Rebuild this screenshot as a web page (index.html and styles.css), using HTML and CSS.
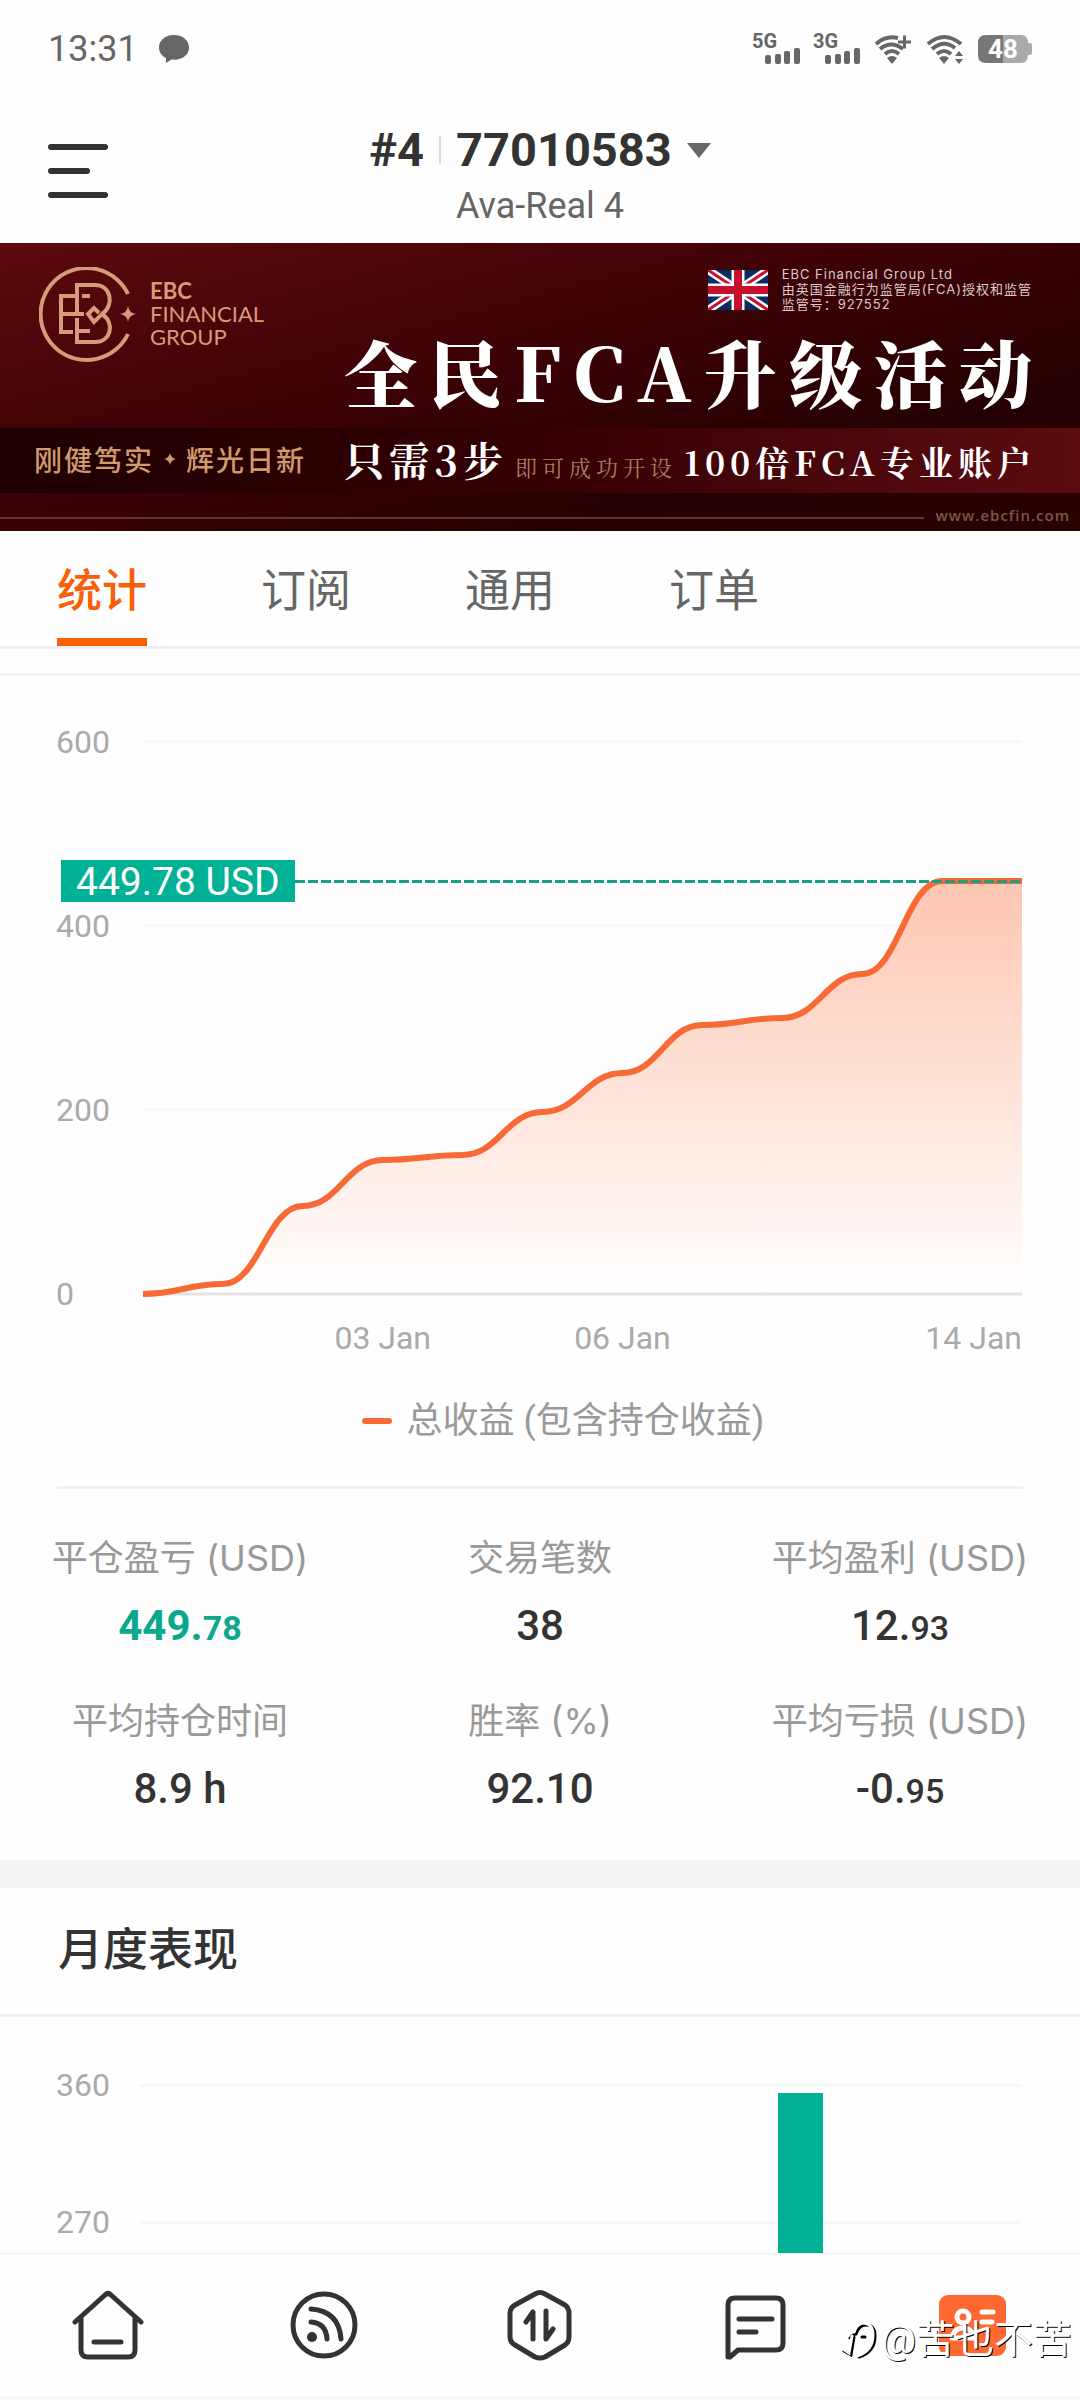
FILE: index.html
```html
<!DOCTYPE html>
<html lang="zh-CN">
<head>
    <meta charset="UTF-8">
    <meta name="viewport" content="width=device-width, initial-scale=1.0">
    <title>77010583 - 统计</title>
    <link rel="stylesheet" href="styles.css">
</head>
<body>
    <div class="status-bar">
        <div class="status-left">
            <span class="clock">13:31</span>
            <svg width="32" height="30" viewBox="0 0 32 30" fill="#666">
                <path d="M16 1C7 1 1 6.500 1 13.500c0 5 3 8.500 7 10.500v5l5.500-3.500c10 1 17.500-4 17.500-12C31 6.500 25 1 16 1Z"/>
            </svg>
        </div>
        <div class="status-right">
            <svg width="50" height="44" viewBox="0 -6 50 44" fill="#666">
                <text class="net" x="2" y="15">5G</text>
                <rect x="15" y="22" width="6" height="9" rx="2"/>
                <rect x="25" y="21" width="6" height="10" rx="2"/>
                <rect x="34" y="18" width="6" height="13" rx="2"/>
                <rect x="44" y="15" width="6" height="16" rx="2"/>
            </svg>
            <svg width="50" height="44" viewBox="0 -6 50 44" fill="#666">
                <text class="net" x="1" y="15">3G</text>
                <rect x="13" y="22" width="6" height="9" rx="2"/>
                <rect x="23" y="21" width="6" height="10" rx="2"/>
                <rect x="32" y="18" width="6" height="13" rx="2"/>
                <rect x="42" y="15" width="6" height="16" rx="2"/>
            </svg>
            <svg width="40" height="32" viewBox="0 0 40 32" fill="none" stroke="#666" stroke-width="4">
                <path d="M2 11Q12 2 24 5"/>
                <path d="M6 16Q17 7 29 16"/>
                <path d="M11 21Q18 15 25 21"/>
                <path d="M13 25q5-4 10 0l-5 6z" fill="#666" stroke="none"/>
                <path d="M24 9h13M30.500 2.500v13" stroke-width="3"/>
            </svg>
            <svg width="40" height="32" viewBox="0 0 40 32" fill="none" stroke="#666" stroke-width="4">
                <path d="M2 11Q18-3 35 11"/>
                <path d="M6 16Q18 6 29 15"/>
                <path d="M11 21Q18 15 25 21"/>
                <path d="M13 25q5-4 10 0l-5 6z" fill="#666" stroke="none"/>
                <path d="m33 18 4 5h-8zM33 31l4-5h-8z" fill="#666" stroke="none"/>
            </svg>
            <svg width="54" height="30" viewBox="0 0 54 30">
                <path d="M8 1h17v28H8q-8 0-8-8V9q0-8 8-8Z" fill="#777"/>
                <path d="M25 1h18q7 0 7 8h2q2 0 2 3v6q0 3-2 3h-2q0 8-7 8H25Z" fill="#aaa"/>
                <text class="battery" x="25" y="24" text-anchor="middle">48</text>
            </svg>
        </div>
    </div>

    <header class="header">
        <button class="menu-btn" aria-label="菜单">
            <span></span><span class="short"></span><span></span>
        </button>
        <button class="account">
            <span class="account-line">
                <span>#4</span>
                <span class="account-sep"></span>
                <span>77010583</span>
                <svg width="24" height="15" viewBox="0 0 24 15" fill="#666"><path d="M0 0h24L12 15z"/></svg>
            </span>
            <span class="server">Ava-Real 4</span>
        </button>
    </header>

    <a class="banner" href="#">
        <div class="banner-top">
            <div class="brand">
                <svg width="100" height="96" viewBox="0 0 100 96" fill="none" stroke="#d69b78" stroke-width="4">
                    <path d="M89 27A46 46 0 1 0 89 67"/>
                    <path d="M36 29H22v36h12M22 47h23"/>
                    <path d="M38 47V18h18c16 0 20 20 7 29l-8 8-6-8 6-6 5 5"/>
                    <path d="M38 51v24h18c16 0 20-19 8-27M43 29h8M38 64h13"/>
                    <path d="M89 39q1 7 8 8-7 1-8 8-1-7-8-8 7-1 8-8z" fill="#d69b78" stroke="none"/>
                </svg>
                <div class="brand-name"><b>EBC</b><br>FINANCIAL<br>GROUP</div>
            </div>
            <div class="banner-main">
                <div class="licence">
                    <svg width="60" height="40" viewBox="0 0 60 40">
                        <path fill="#0b2a60" d="M0 0h60v40H0z"/>
                        <path stroke="#fff" stroke-width="8" d="m0 0 60 40M60 0 0 40"/>
                        <path stroke="#c8102e" stroke-width="3" d="m0 0 60 40M60 0 0 40"/>
                        <path stroke="#fff" stroke-width="13" d="M30 0v40M0 20h60"/>
                        <path stroke="#c8102e" stroke-width="8" d="M30 0v40M0 20h60"/>
                    </svg>
                    <div>EBC Financial Group Ltd<br>由英国金融行为监管局(FCA)授权和监管<br>监管号：927552</div>
                </div>
                <div class="banner-title">全民FCA升级活动</div>
            </div>
        </div>
        <div class="banner-band">
            <div class="motto">
                <span>刚健笃实</span>
                <svg width="12" height="12" viewBox="0 0 12 12" fill="#cf9a6c"><path d="M6 0q1 5 6 6-5 1-6 6-1-5-6-6 5-1 6-6z"/></svg>
                <span>辉光日新</span>
            </div>
            <div class="offer">
                <span class="offer-lead">只需3步</span>
                <span class="offer-mid">即可成功开设</span>
                <span class="offer-end">100倍FCA专业账户</span>
            </div>
        </div>
        <div class="banner-foot"><span class="rule"></span><span class="site">www.ebcfin.com</span></div>
    </a>

    <nav class="tabs">
        <a class="tab active" href="#">统计</a>
        <a class="tab" href="#">订阅</a>
        <a class="tab" href="#">通用</a>
        <a class="tab" href="#">订单</a>
    </nav>

    <main>
        <section class="profit">
            <div class="chart">
                <div class="y-axis"><span>600</span><span>400</span><span>200</span><span>0</span></div>
                <div class="plot">
                    <svg viewBox="0 0 880 552" preserveAspectRatio="none">
                        <defs>
                            <linearGradient id="area" x1="0" y1="0" x2="0" y2="1">
                                <stop offset="0" stop-color="#fec6b2"/>
                                <stop offset="1" stop-color="#fff"/>
                            </linearGradient>
                        </defs>
                        <path class="grid-line" d="M0 0H880M0 184H880M0 368H880"/>
                        <path fill="url(#area)" d="M0 552C36 552 44 542 80 542S124 464 160 464 204 418 240 418 284 413 320 413 364 370 400 370 444 331 480 331 524 283 560 283 604 276 640 276 684 232 720 232 764 139 800 139H880V552Z"/>
                        <path class="axis-line" d="M0 552H880"/>
                        <path class="profit-line" d="M0 552C36 552 44 542 80 542S124 464 160 464 204 418 240 418 284 413 320 413 364 370 400 370 444 331 480 331 524 283 560 283 604 276 640 276 684 232 720 232 764 139 800 139H880"/>
                    </svg>
                </div>
                <div class="x-axis">
                    <span class="day-3">03 Jan</span>
                    <span class="day-6">06 Jan</span>
                    <span class="day-14">14 Jan</span>
                </div>
                <div class="marker">
                    <span class="marker-value">449.78 USD</span>
                    <span class="marker-line"></span>
                </div>
            </div>
            <div class="legend"><i></i>总收益 (包含持仓收益)</div>
        </section>

        <dl class="stats">
            <div><dt>平仓盈亏 (USD)</dt><dd class="up">449.<small>78</small></dd></div>
            <div><dt>交易笔数</dt><dd>38</dd></div>
            <div><dt>平均盈利 (USD)</dt><dd>12.<small>93</small></dd></div>
            <div><dt>平均持仓时间</dt><dd>8.9 h</dd></div>
            <div><dt>胜率 (%)</dt><dd>92.10</dd></div>
            <div><dt>平均亏损 (USD)</dt><dd>-0.<small>95</small></dd></div>
        </dl>

        <section class="monthly">
            <h2>月度表现</h2>
            <div class="bars">
                <div class="bar-row"><span>360</span><hr></div>
                <div class="bar-row"><span>270</span><hr></div>
                <div class="bar"></div>
            </div>
        </section>
    </main>

    <nav class="bottom-nav">
        <a href="#" aria-label="首页">
            <svg width="72" height="72" viewBox="0 0 72 72">
                <path d="M3 33 33 6q3-3 6 0l30 27M9 28v33q0 7 7 7h40q7 0 7-7V28M22 53h27"/>
            </svg>
        </a>
        <a href="#" aria-label="动态">
            <svg width="72" height="72" viewBox="0 0 72 72">
                <circle cx="36" cy="36" r="31"/>
                <circle cx="24" cy="48" r="5" fill="#333" stroke="none"/>
                <path d="M23 33q15 1 16 17M23 20q28 2 30 30"/>
            </svg>
        </a>
        <a href="#" aria-label="交易">
            <svg width="72" height="72" viewBox="0 0 72 72">
                <path d="M31 5 11 16q-5 3-5 8v24q0 5 5 8l20 12q5 2 10 0l20-12q4-3 4-8V24q0-5-4-8L41 5q-5-3-10 0Z"/>
                <path d="m22 33 7-10v27M42 22v28l7-10"/>
            </svg>
        </a>
        <a href="#" aria-label="消息">
            <svg width="72" height="72" viewBox="0 0 72 72">
                <path d="M8 68V16q0-7 7-7h41q7 0 7 7v38q0 7-7 7H18l-8 7ZM19 30h33M19 43h17"/>
            </svg>
        </a>
        <a href="#" aria-label="我的">
            <svg width="72" height="72" viewBox="0 0 72 72">
                <rect x="3" y="6" width="67" height="61" rx="9" fill="#ff6931" stroke="none"/>
                <g stroke="#fff">
                    <circle cx="27" cy="28" r="6"/>
                    <path d="M46 23h11M46 33h10M16 49q2-10 11-10t12 10Z"/>
                </g>
            </svg>
        </a>
        <div class="watermark">
            <svg width="36" height="40" viewBox="0 0 36 40" fill="none" stroke-linecap="round">
                <path stroke="#000" stroke-width="3" d="M8 18q2-4 6-4 3-9 10-9 9 0 9 11 0 16-16 21M12 17 9 35l-7-4M20 17h3"/>
                <path stroke="#fff" stroke-width="3" d="M6 16q2-4 6-4 3-9 10-9 9 1 9 12 0 16-16 21M10 16 7 33l-6-4"/>
            </svg>
            <span>@苦也不苦</span>
        </div>
    </nav>
</body>
</html>
```
FILE: styles.css
```css
* {
    margin: 0;
    padding: 0;
    box-sizing: border-box;
}

body {
    font-family: Roboto, "Noto Sans CJK SC", sans-serif;
    min-height: 100vh;
    background: #fefefe;
    color: #333;
    display: flex;
    flex-direction: column;
}

a {
    color: inherit;
    text-decoration: none;
}

button {
    border: none;
    background: none;
    font: inherit;
    color: inherit;
    cursor: pointer;
}

svg {
    display: block;
}

/* status bar */
.status-bar {
    height: 98px;
    padding: 0 48px;
    display: flex;
    align-items: center;
    justify-content: space-between;
}

.status-left,
.status-right {
    display: flex;
    align-items: center;
}

.status-left {
    gap: 20px;
}

.status-right {
    gap: 12px;
}

.clock {
    font-size: 36px;
    line-height: 40px;
    color: #666;
}

.net {
    font-size: 20px;
    font-weight: 700;
}

.battery {
    font-size: 26px;
    font-weight: 700;
    fill: #fff;
}

/* header */
.header {
    display: grid;
    grid-template-columns: 1fr auto 1fr;
    align-items: center;
    padding: 24px 48px 13px;
}

.menu-btn {
    width: 60px;
    display: flex;
    flex-direction: column;
    gap: 18px;
    margin-bottom: 10px;
}

.menu-btn span {
    height: 6px;
    width: 60px;
    border-radius: 3px;
    background: #333;
}

.menu-btn .short {
    width: 42px;
}

.account {
    display: flex;
    flex-direction: column;
    align-items: center;
    gap: 4px;
}

.account-line {
    display: flex;
    align-items: center;
    gap: 15px;
    font-size: 47px;
    line-height: 56px;
    font-weight: 700;
}

.account-sep {
    width: 2px;
    height: 28px;
    background: #ddd;
}

.server {
    font-size: 36px;
    line-height: 48px;
    color: #666;
}

/* banner */
.banner {
    display: block;
    color: #fff;
    background: linear-gradient(165deg, #5d0a0e 0%, #420307 35%, #250002 75%, #2a0002 100%);
}

.banner-top {
    height: 185px;
    padding: 24px 36px 0 39px;
    display: flex;
    justify-content: space-between;
}

.brand {
    display: flex;
    align-items: flex-start;
    gap: 11px;
    color: #d69b78;
}

.brand-name {
    font-family: Lato, sans-serif;
    font-size: 22px;
    line-height: 23px;
    padding-top: 12px;
}

.banner-main {
    display: flex;
    flex-direction: column;
    align-items: flex-end;
}

.licence {
    display: flex;
    gap: 14px;
    align-items: center;
    margin-right: 12px;
    font-family: Inter, "Noto Sans CJK SC", sans-serif;
    font-size: 13px;
    line-height: 15px;
    letter-spacing: 1px;
    color: #ddc9c9;
}

.banner-title {
    font-family: "Noto Serif CJK SC", "Noto Sans CJK SC", serif;
    font-size: 73px;
    line-height: 118px;
    font-weight: 900;
    letter-spacing: 12px;
    white-space: nowrap;
}

.banner-band {
    height: 65px;
    padding: 0 44px 4px 34px;
    display: flex;
    align-items: center;
    justify-content: space-between;
    background: linear-gradient(90deg, #1e0001, #350004 50%, #5c0c10);
    white-space: nowrap;
}

.motto {
    display: flex;
    align-items: center;
    gap: 10px;
    font-size: 28px;
    font-weight: 500;
    letter-spacing: 2px;
    color: #cf9a6c;
}

.offer {
    display: flex;
    align-items: baseline;
    gap: 7px;
    font-family: "Noto Serif CJK SC", "Noto Sans CJK SC", serif;
    letter-spacing: 5px;
}

.offer-lead {
    font-size: 40px;
    font-weight: 700;
}

.offer-mid {
    font-size: 22px;
    color: #b07c5f;
}

.offer-end {
    font-size: 34px;
    font-weight: 700;
}

.banner-foot {
    height: 38px;
    padding: 12px 10px 0 0;
    display: flex;
    align-items: center;
    gap: 12px;
    font-family: "Open Sans", sans-serif;
    font-size: 15px;
    line-height: 20px;
    font-weight: 600;
    letter-spacing: 1px;
    color: #7d5742;
}

.rule {
    flex: 1;
    height: 2px;
    background: #6b2f2c;
}

.site {
    padding-bottom: 6px;
}

/* tabs */
.tabs {
    display: flex;
    gap: 114px;
    padding: 0 57px;
    border-bottom: 3px solid #f0f0f0;
}

.tab {
    width: 90px;
    height: 115px;
    font-size: 45px;
    line-height: 122px;
    text-align: center;
    color: #666;
    white-space: nowrap;
}

.tab.active {
    color: #f95f06;
    font-weight: 500;
    border-bottom: 8px solid #f95f06;
}

main {
    flex: 1;
    display: flex;
    flex-direction: column;
}

/* profit chart */
.profit {
    margin-top: 24px;
    padding: 66px 58px 39px 56px;
    border-top: 3px solid #f0f0f0;
}

.chart {
    position: relative;
    display: grid;
    grid-template-columns: 87px 1fr;
    font-size: 32px;
    line-height: 40px;
    color: #aaa;
}

.y-axis {
    height: 592px;
    margin: -20px 0;
    display: flex;
    flex-direction: column;
    justify-content: space-between;
}

.plot svg {
    width: 100%;
    height: 552px;
    overflow: visible;
}

.plot path {
    vector-effect: non-scaling-stroke;
}

.grid-line {
    stroke: #f7f7f7;
    stroke-width: 3;
}

.axis-line {
    stroke: #e3e3e3;
    stroke-width: 3;
}

.profit-line {
    fill: none;
    stroke: #f76a36;
    stroke-width: 6;
}

.x-axis {
    grid-column: 2;
    padding-top: 24px;
    display: grid;
    grid-template-columns: repeat(22, 1fr);
    text-align: center;
    white-space: nowrap;
}

.day-3 {
    grid-column: 5 / 9;
}

.day-6 {
    grid-column: 11 / 15;
}

.day-14 {
    grid-column: 19 / 23;
    text-align: right;
}

/* current value, drawn over the plot */
.marker {
    position: absolute;
    top: 118px;
    left: 5px;
    right: 0;
    display: flex;
    align-items: center;
}

.marker-value {
    padding: 2px 15px 0;
    font-size: 39px;
    line-height: 40px;
    background: #00b195;
    color: #fff;
}

.marker-line {
    flex: 1;
    height: 3px;
    background: repeating-linear-gradient(90deg, #18a086 0 10px, transparent 10px 13px);
}

.legend {
    margin-top: 37px;
    padding-left: 48px;
    display: flex;
    align-items: center;
    justify-content: center;
    gap: 15px;
    font-size: 36px;
    line-height: 52px;
    color: #999;
}

.legend i {
    width: 30px;
    height: 6px;
    border-radius: 3px;
    background: #f76a36;
}

/* stats */
.stats {
    display: grid;
    grid-template-columns: repeat(3, 1fr);
    row-gap: 39px;
    padding: 44px 0 43px;
    text-align: center;
    border-bottom: 28px solid #f4f4f4;
    position: relative;
}

.stats::before {
    content: "";
    position: absolute;
    top: 0;
    left: 57px;
    right: 57px;
    height: 3px;
    background: #f0f0f0;
}

.stats dt {
    font-family: Inter, "Noto Sans CJK SC", sans-serif;
    font-size: 36px;
    line-height: 56px;
    color: #999;
}

.stats dd {
    margin-top: 12px;
    font-size: 42px;
    line-height: 56px;
    font-weight: 500;
}

.stats small {
    font-size: 34px;
    line-height: 34px;
}

.stats .up {
    color: #0aa88c;
    font-weight: 700;
}

/* monthly performance */
.monthly {
    flex: 1;
    display: flex;
    flex-direction: column;
}

.monthly h2 {
    padding: 0 58px;
    font-size: 45px;
    line-height: 126px;
    font-weight: 500;
    border-bottom: 3px solid #f0f0f0;
}

.bars {
    flex: 1;
    min-height: 236px;
    position: relative;
    padding: 48px 58px 0 56px;
}

.bar-row {
    height: 40px;
    margin-bottom: 97px;
    display: grid;
    grid-template-columns: 84px 1fr;
    align-items: center;
    font-size: 32px;
    color: #aaa;
}

.bar-row:nth-child(2) {
    margin-bottom: 0;
}

.bar-row hr {
    border: none;
    height: 3px;
    background: #f7f7f7;
}

.bar {
    position: absolute;
    left: 72%;
    top: 76px;
    bottom: 0;
    width: 45px;
    background: #00b195;
}

/* bottom navigation */
.bottom-nav {
    position: sticky;
    bottom: 0;
    display: grid;
    grid-template-columns: repeat(5, 1fr);
    background: #fefefe;
    border-top: 1px solid #eee;
    border-bottom: 4px solid #f8f8f8;
}

.bottom-nav a {
    height: 142px;
    display: flex;
    align-items: center;
    justify-content: center;
}

.bottom-nav a svg {
    fill: none;
    stroke: #333;
    stroke-width: 5;
    stroke-linecap: round;
    stroke-linejoin: round;
}

.watermark {
    position: absolute;
    right: 8px;
    bottom: 32px;
    display: flex;
    align-items: center;
    gap: 3px;
    font-size: 39px;
    line-height: 48px;
    color: #fff;
    text-shadow: 1px 1px 0 #000;
    pointer-events: none;
}
```
